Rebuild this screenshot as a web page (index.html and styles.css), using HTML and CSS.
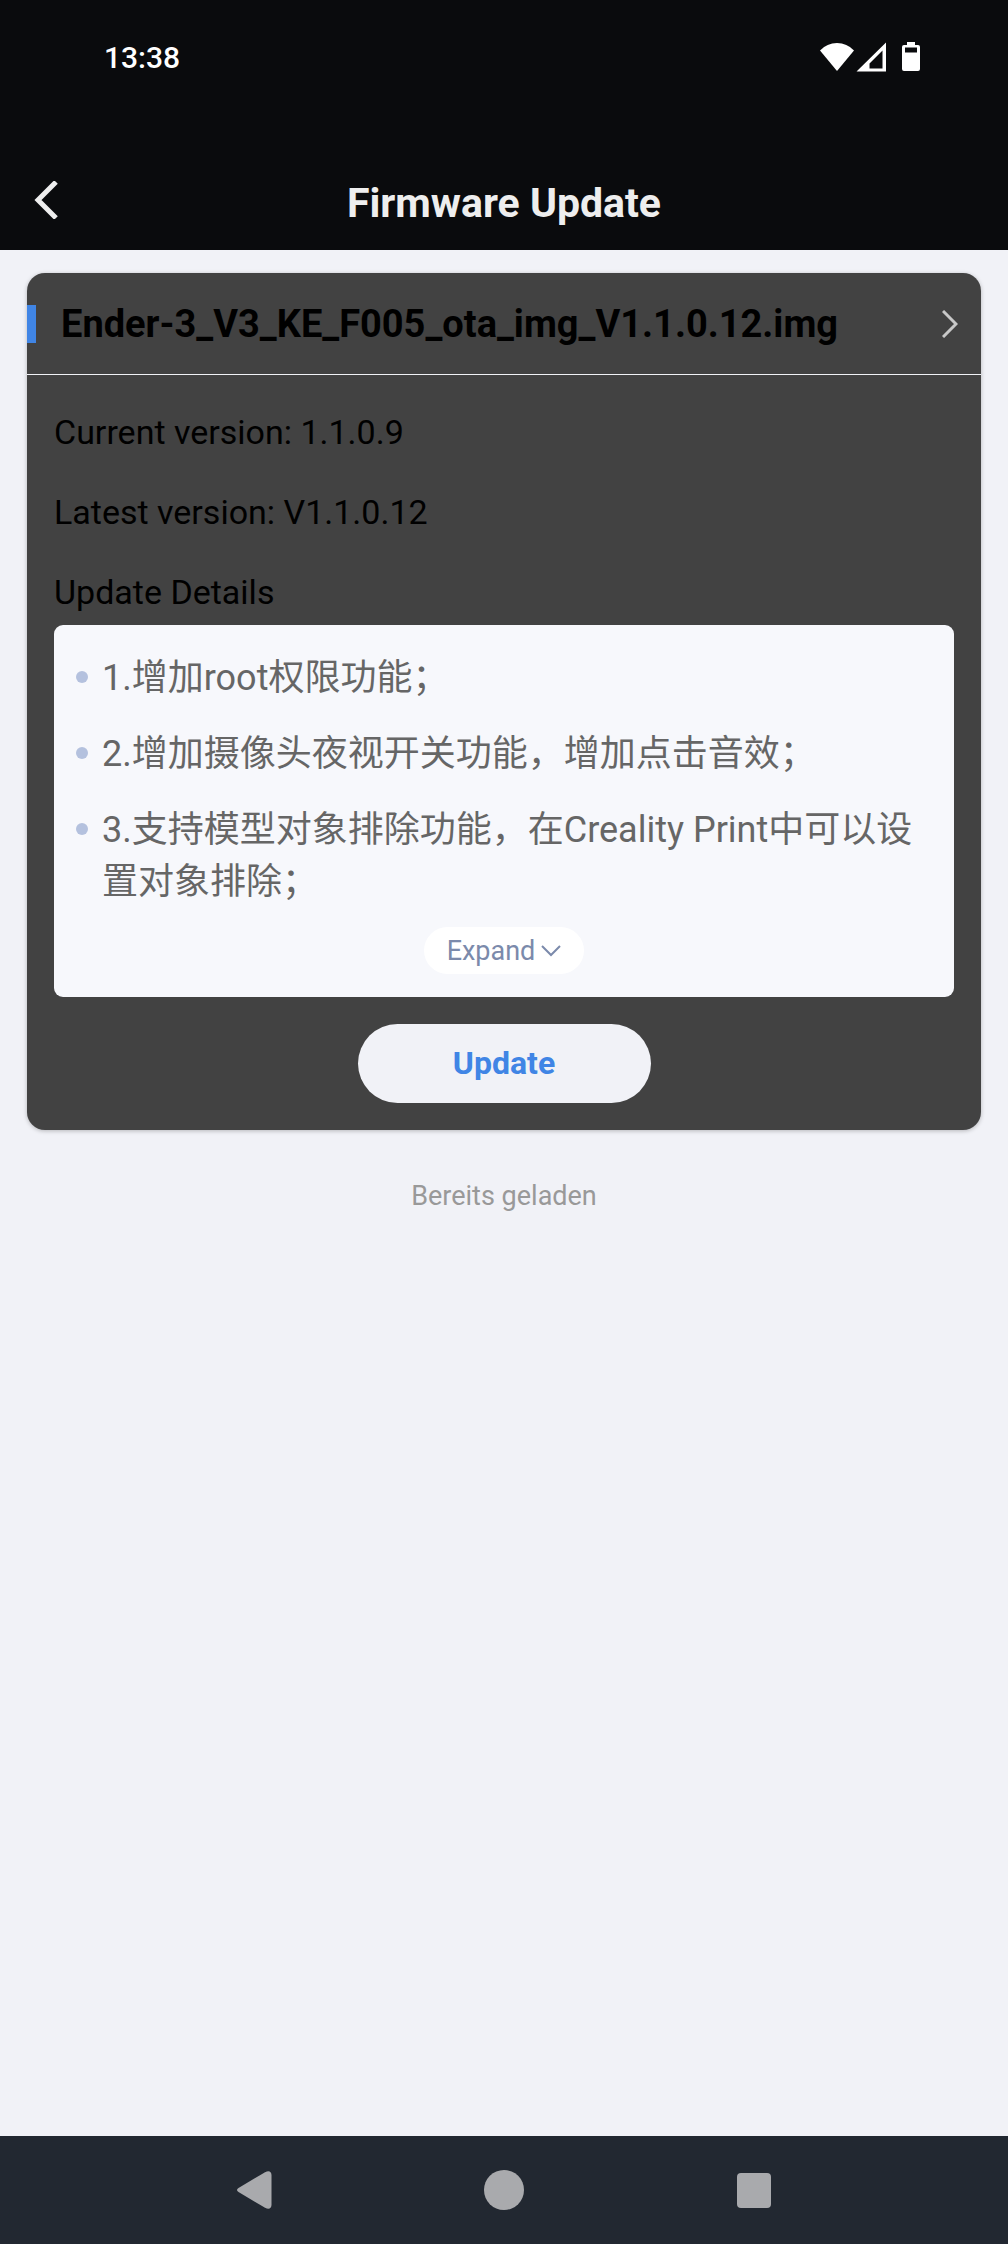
FILE: index.html
```html
<!DOCTYPE html>
<html lang="en">
<head>
<meta charset="utf-8">
<meta name="viewport" content="width=device-width, initial-scale=1">
<title>Firmware Update</title>
<link rel="stylesheet" href="styles.css">
</head>
<body>
<div class="top">
  <div class="status">
    <time class="clock">13:38</time>
    <svg class="status-icons" width="100" height="30" viewBox="0 0 100 30" fill="#fff" aria-hidden="true">
      <path d="M0 8.5Q7 1 17 1T34 8.5L17 29Z"/>
      <path fill-rule="evenodd" d="M36.500 29.500L66 .5V29.500ZM49.500 26.500H62.500V8.500L49.500 21.500Z"/>
      <path fill-rule="evenodd" d="M87 0H95V3H98Q100 3 100 5V27Q100 29 98 29H84Q82 29 82 27V5Q82 3 84 3H87ZM85 5.500V10.500H97V5.500Z"/>
    </svg>
  </div>
  <header class="app-bar">
    <button class="icon-button" type="button" aria-label="Back">
      <svg width="24" height="38" viewBox="0 0 24 38" fill="none" stroke="#eee" stroke-width="5" aria-hidden="true"><path d="M22 1L4 19L22 37"/></svg>
    </button>
    <h1 class="page-title">Firmware Update</h1>
  </header>
</div>
<main class="content">
  <section class="card">
    <a class="card-head" href="#details">
      <span class="file-name">Ender-3_V3_KE_F005_ota_img_V1.1.0.12.img</span>
      <svg width="16" height="28" viewBox="0 0 16 28" fill="none" stroke="#c8c8c8" stroke-width="3" aria-hidden="true"><path d="M1 1L14 14L1 27"/></svg>
    </a>
    <div class="card-body" id="details">
      <p class="field">Current version: 1.1.0.9</p>
      <p class="field">Latest version: V1.1.0.12</p>
      <h2 class="field">Update Details</h2>
      <div class="notes">
        <ul class="note-list" lang="zh-CN">
          <li>1.增加root权限功能；</li>
          <li>2.增加摄像头夜视开关功能，增加点击音效；</li>
          <li>3.支持模型对象排除功能，在Creality Print中可以设置对象排除；</li>
        </ul>
        <button class="expand" type="button">Expand
          <svg width="20" height="12" viewBox="0 0 20 12" fill="none" stroke="#7b8aab" stroke-width="2" aria-hidden="true"><path d="M1 1L10 10L19 1"/></svg>
        </button>
      </div>
      <button class="update" type="button">Update</button>
    </div>
  </section>
  <p class="loaded" lang="de">Bereits geladen</p>
</main>
<nav class="nav" aria-label="System">
  <button class="icon-button" type="button" aria-label="Back">
    <svg width="40" height="40" viewBox="0 0 40 40" fill="#a9aaad" aria-hidden="true"><path d="M4.500 18L31 2.200Q37 -.5 37.500 5V35Q37 40.500 31 37.800L4.500 22Q1.500 20 4.500 18Z"/></svg>
  </button>
  <button class="icon-button" type="button" aria-label="Home">
    <svg width="40" height="40" viewBox="0 0 40 40" fill="#a9aaad" aria-hidden="true"><circle cx="20" cy="20" r="20"/></svg>
  </button>
  <button class="icon-button" type="button" aria-label="Recent apps">
    <svg width="40" height="40" viewBox="0 0 40 40" fill="#a9aaad" aria-hidden="true"><rect x="3" y="3" width="34" height="35" rx="4"/></svg>
  </button>
</nav>
</body>
</html>
```
FILE: styles.css
```css
* {
  box-sizing: border-box;
}

body {
  margin: 0;
  min-height: 100vh;
  display: flex;
  flex-direction: column;
  background: #f1f2f7;
  color: #000;
  font-family: Roboto, "Noto Sans CJK SC", sans-serif;
}

h1, h2, p, ul {
  margin: 0;
  padding: 0;
}

button {
  border: 0;
  font-family: inherit;
  cursor: pointer;
}

svg {
  display: block;
  flex: none;
}

.icon-button {
  display: flex;
  padding: 0;
  background: none;
}

.top {
  background: #0a0b0d;
}

.status {
  display: flex;
  align-items: center;
  justify-content: space-between;
  height: 114px;
  padding: 0 88px 0 104px;
}

.clock {
  color: #fff;
  font-size: 30px;
  font-weight: 500;
}

.app-bar {
  display: grid;
  grid-template-columns: 24px 1fr 24px;
  align-items: center;
  height: 136px;
  padding: 36px 34px 0;
}

.page-title {
  padding-top: 6px;
  color: #eee;
  font-size: 41px;
  line-height: 48px;
  text-align: center;
}

.content {
  flex: 1;
  padding: 23px 27px;
}

.card {
  overflow: hidden;
  border-radius: 18px;
  background: #424242;
  box-shadow: 0 1px 4px rgba(0, 0, 0, 0.25);
}

.card-head {
  display: flex;
  align-items: center;
  justify-content: space-between;
  height: 102px;
  padding-right: 23px;
  border-bottom: 1px solid #f1f2f7;
  color: inherit;
  text-decoration: none;
}

.file-name {
  padding-left: 25px;
  border-left: 9px solid #4085e5;
  font-size: 38px;
  font-weight: 700;
  line-height: 38px;
}

.card-body {
  padding: 37px 27px 27px;
}

.field {
  margin-bottom: 40px;
  font-size: 34px;
  font-weight: 400;
  line-height: 40px;
}

h2.field {
  margin-bottom: 13px;
}

.notes {
  padding: 27px 22px 23px;
  border-radius: 9px;
  background: #f7f8fc;
}

.note-list {
  display: grid;
  gap: 24px;
  margin-bottom: 19px;
  color: #666;
  font-size: 36px;
  line-height: 52px;
  list-style: none;
}

.note-list li {
  display: flex;
  gap: 14px;
}

.note-list li::before {
  content: "";
  flex: none;
  width: 12px;
  height: 12px;
  margin-top: 19px;
  border-radius: 50%;
  background: #b4c1de;
}

.expand {
  display: flex;
  align-items: center;
  gap: 6px;
  height: 47px;
  margin: 0 auto;
  padding: 0 23px;
  border-radius: 24px;
  background: #fff;
  color: #7b8aab;
  font-size: 27px;
}

.update {
  display: block;
  width: 293px;
  height: 79px;
  margin: 27px auto 0;
  padding: 0 0 2px;
  border-radius: 40px;
  background: #f1f2f7;
  color: #4085e5;
  font-size: 32px;
  font-weight: 700;
}

.loaded {
  margin-top: 50px;
  color: #999;
  font-size: 27px;
  line-height: 32px;
  text-align: center;
}

.nav {
  display: flex;
  align-items: center;
  justify-content: space-between;
  height: 108px;
  padding: 0 calc(23% + 2px);
  background: #222831;
}
```
